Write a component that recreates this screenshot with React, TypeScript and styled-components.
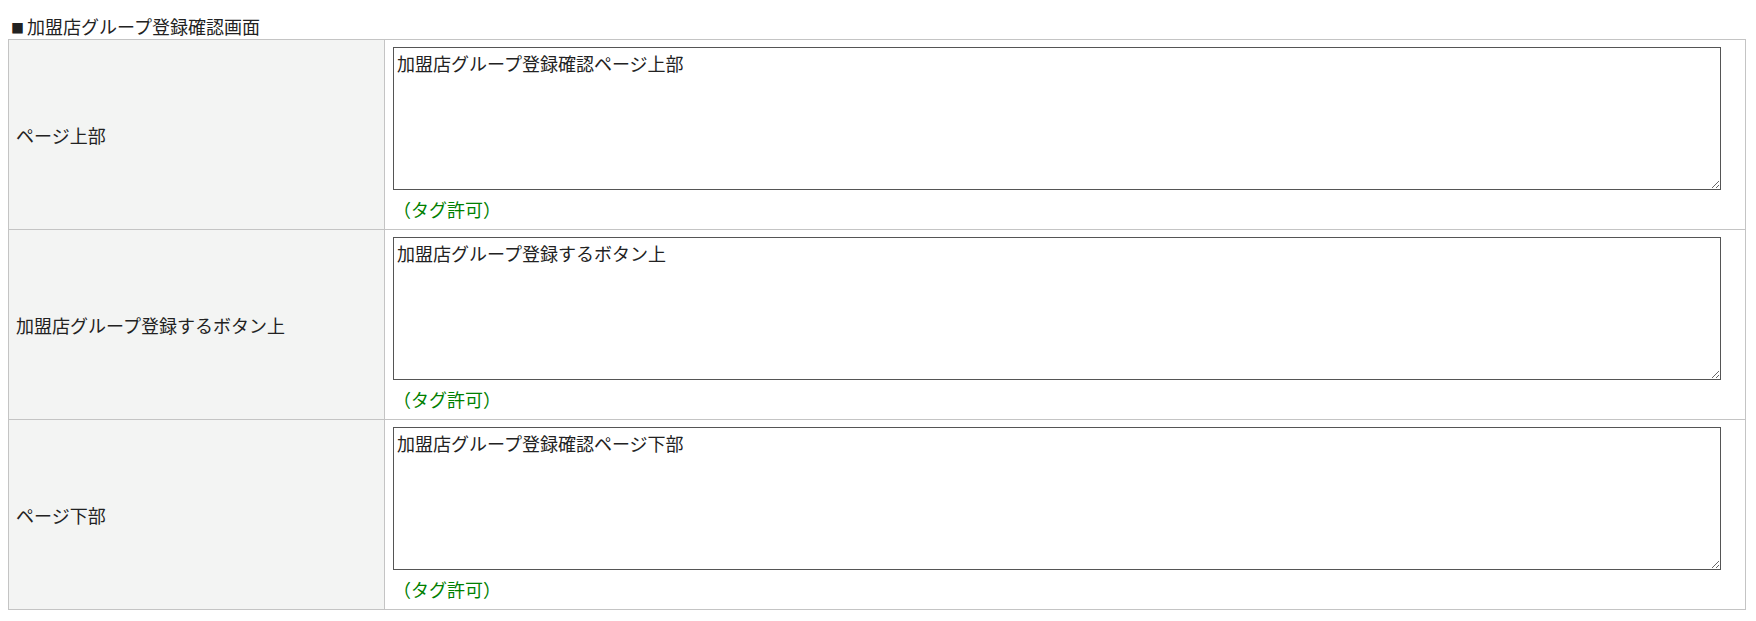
import styled, { createGlobalStyle } from "styled-components";

const GlobalStyle = createGlobalStyle`
  body {
    margin: 8px;
    background: #ffffff;
    color: #222222;
    font-family: "Noto Sans CJK JP", "Noto Sans", sans-serif;
    font-size: 18px;
  }
`;

const rows = [
  { label: "ページ上部", value: "加盟店グループ登録確認ページ上部" },
  { label: "加盟店グループ登録するボタン上", value: "加盟店グループ登録するボタン上" },
  { label: "ページ下部", value: "加盟店グループ登録確認ページ下部" },
];

export default function App() {
  return (
    <>
      <GlobalStyle />
      <Section>
        <Title>
          <Marker>■</Marker>加盟店グループ登録確認画面
        </Title>
        <FormTable>
          <tbody>
            {rows.map((row) => (
              <tr key={row.label}>
                <LabelCell>{row.label}</LabelCell>
                <ValueCell>
                  <Editor defaultValue={row.value} />
                  <TagNote>（タグ許可）</TagNote>
                </ValueCell>
              </tr>
            ))}
          </tbody>
        </FormTable>
      </Section>
    </>
  );
}

const Section = styled.section`
  padding-top: 5px;
`;

const Title = styled.div`
  height: 26px;
  line-height: 26px;
  color: #222222;
`;

const Marker = styled.span`
  font-size: 13px;
  line-height: 1;
  margin: 0 3px 0 3px;
  vertical-align: 1px;
`;

const FormTable = styled.table`
  width: 1738px;
  border-collapse: collapse;
  border: 1px solid #c4c4c4;
`;

const LabelCell = styled.th`
  width: 361px;
  padding: 7px;
  border: 1px solid #c4c4c4;
  background: #f3f4f3;
  text-align: left;
  font-weight: normal;
  vertical-align: middle;
  height: 175px;
`;

const ValueCell = styled.td`
  padding: 7px 7px 7px 8px;
  border: 1px solid #c4c4c4;
  vertical-align: top;
`;

const Editor = styled.textarea`
  display: block;
  box-sizing: border-box;
  width: 1328px;
  height: 143px;
  margin: 0;
  padding: 3px;
  border: 1px solid #555555;
  border-radius: 0;
  font-family: "Noto Sans CJK JP", "Noto Sans", sans-serif;
  font-size: 18px;
  line-height: 1.4;
  color: #222222;
  background: #ffffff;
`;

const TagNote = styled.div`
  margin-top: 6px;
  line-height: 26px;
  color: #008000;
`;
